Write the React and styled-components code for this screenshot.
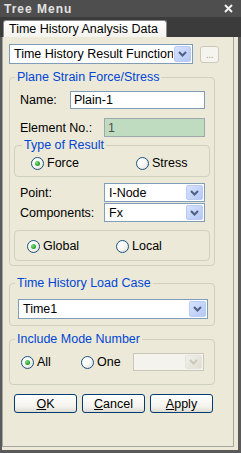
import React from 'react';
import styled, { createGlobalStyle } from 'styled-components';

const GlobalStyle = createGlobalStyle`
  html, body {
    margin: 0;
    padding: 0;
  }
  body {
    font-family: "Liberation Sans", Arial, sans-serif;
    font-size: 12.5px;
    background: #ece9d8;
    color: #000;
  }
`;

const Window = styled.div`
  width: 241px;
  height: 453px;
  display: flex;
  flex-direction: column;
  background: #4b4b4b;
  overflow: hidden;
`;

const TitleBar = styled.div`
  height: 17px;
  display: flex;
  align-items: center;
  justify-content: space-between;
  padding: 0 8px 0 4px;
  background: #4e4e4e;
  color: #e2e2e2;
  font-weight: bold;
  font-size: 12px;
  letter-spacing: 1px;
`;

const TabStrip = styled.div`
  height: 20px;
  box-sizing: border-box;
  display: flex;
  align-items: flex-end;
  padding-left: 3px;
  background: #3b3b3b;
`;

const Tab = styled.div`
  width: 164px;
  height: 17px;
  box-sizing: border-box;
  padding-left: 5px;
  line-height: 16px;
  white-space: nowrap;
  overflow: hidden;
  background: linear-gradient(#ffffff, #f4f3ee);
  border: 1px solid #8a8a8a;
  border-bottom: none;
  border-radius: 3px 3px 0 0;
`;

const Body = styled.div`
  flex: 1;
  display: flex;
  background: #ece9d8;
  border-left: 2px solid #5a5a5a;
  border-right: 3px solid #5a5a5a;
  border-bottom: 3px solid #5a5a5a;
  padding: 0 4px 3px 0;
`;

const Page = styled.div`
  flex: 1;
  display: flex;
  flex-direction: column;
  align-items: flex-start;
  border: 1px solid #a6a6a0;
  border-top: none;
  padding: 7px 0 0 6px;
`;

const TopRow = styled.div`
  display: flex;
  align-items: flex-start;
  gap: 7px;
`;

const ComboBox = styled.div`
  width: ${p => p.$width}px;
  height: ${p => p.$height || 20}px;
  box-sizing: border-box;
  display: flex;
  align-items: stretch;
  border: 1px solid ${p => (p.$disabled ? '#c9c7ba' : '#7f9db9')};
  background: ${p => (p.$disabled ? '#f4f3ee' : '#fff')};
`;

const ComboText = styled.span`
  flex: 1;
  min-width: 0;
  overflow: hidden;
  white-space: nowrap;
  padding-left: 4px;
  display: flex;
  align-items: center;
`;

const ArrowButton = styled.span`
  width: 17px;
  flex: none;
  margin: 1px;
  box-sizing: border-box;
  display: flex;
  align-items: center;
  justify-content: center;
  border-radius: 2px;
  border: 1px solid ${p => (p.$disabled ? '#e6e4da' : '#b9cbf5')};
  background: ${p =>
    p.$disabled
      ? 'linear-gradient(135deg, #f2f1ea, #dedcd2)'
      : 'linear-gradient(135deg, #d7e2fc, #b4c8f6)'};
`;

const DotsButton = styled.div`
  width: 19px;
  height: 17px;
  margin-top: 2px;
  box-sizing: border-box;
  border: 1px solid #cbc8bb;
  border-radius: 3px;
  background: #f5f4ee;
  color: #aca899;
  font-size: 11px;
  line-height: 14px;
  text-align: center;
  letter-spacing: -0.5px;
`;

const Group = styled.div`
  display: flex;
  flex-direction: column;
  align-items: flex-start;
  margin-top: ${p => p.$mt || 0}px;
  margin-left: ${p => p.$ml || 0}px;
`;

const Caption = styled.div`
  position: relative;
  z-index: 1;
  margin: 0 0 -7px ${p => p.$ml || 6}px;
  padding: 0 2px;
  line-height: 14px;
  color: #0046d5;
  background: #ece9d8;
`;

const Box = styled.div`
  width: ${p => p.$width || 206}px;
  box-sizing: border-box;
  display: flex;
  flex-direction: column;
  align-items: flex-start;
  border: 1px solid #d0d0bf;
  border-radius: 4px;
  padding: ${p => p.$pad};
  margin-top: ${p => p.$mt || 0}px;
  margin-left: ${p => p.$ml || 0}px;
`;

const FieldRow = styled.div`
  display: flex;
  align-items: center;
  margin-top: ${p => p.$mt || 0}px;
`;

const Label = styled.span`
  width: ${p => p.$width}px;
  white-space: nowrap;
`;

const TextField = styled.div`
  width: ${p => p.$width}px;
  height: ${p => p.$height || 18}px;
  box-sizing: border-box;
  padding-left: 3px;
  display: flex;
  align-items: center;
  border: 1px solid ${p => (p.$readOnly ? '#9fa8ae' : '#7f9db9')};
  background: ${p => (p.$readOnly ? '#c0dcc0' : '#fff')};
  color: ${p => (p.$readOnly ? '#505050' : '#000')};
`;

const RadioRow = styled.div`
  display: flex;
  align-items: center;
  height: ${p => p.$height || 14}px;
`;

const Option = styled.label`
  width: ${p => p.$width}px;
  display: flex;
  align-items: center;
  gap: 3px;
  white-space: nowrap;
`;

const RadioDot = styled.span`
  width: 13px;
  height: 13px;
  flex: none;
  box-sizing: border-box;
  border-radius: 50%;
  border: 1px solid #1c5180;
  background: radial-gradient(circle at 30% 30%, #ffffff 30%, #dcdbd3 100%);
  display: flex;
  align-items: center;
  justify-content: center;

  &::after {
    content: '';
    width: 5px;
    height: 5px;
    border-radius: 50%;
    background: ${p =>
      p.$checked ? 'radial-gradient(circle at 35% 35%, #7fe07f, #1f9e1f 70%)' : 'transparent'};
  }
`;

const ButtonRow = styled.div`
  display: flex;
  gap: 5px;
  margin: 9px 0 0 5px;
`;

const Button = styled.div`
  width: 63px;
  height: 19px;
  box-sizing: border-box;
  display: flex;
  align-items: center;
  justify-content: center;
  border: 1px solid #003c74;
  border-radius: 3px;
  background: linear-gradient(#ffffff, #f3f2ec 70%, #dedbd0);

  u {
    text-decoration: underline;
  }
`;

const Chevron = ({ color }) => (
  <svg width="9" height="6" viewBox="0 0 9 6">
    <polyline points="1,1 4.5,4.5 8,1" fill="none" stroke={color} strokeWidth="2" />
  </svg>
);

const CloseIcon = () => (
  <svg width="9" height="9" viewBox="0 0 9 9">
    <path d="M1 1 L8 8 M8 1 L1 8" stroke="#f2f2f2" strokeWidth="2" />
  </svg>
);

const Combo = ({ width, height, value, disabled }) => (
  <ComboBox $width={width} $height={height} $disabled={disabled}>
    <ComboText>{value}</ComboText>
    <ArrowButton $disabled={disabled}>
      <Chevron color={disabled ? '#c9c7ba' : '#4d6185'} />
    </ArrowButton>
  </ComboBox>
);

const Radio = ({ width, checked, children }) => (
  <Option $width={width}>
    <RadioDot $checked={checked} />
    {children}
  </Option>
);

export default function App() {
  return (
    <Window>
      <GlobalStyle />
      <TitleBar>
        <span>Tree Menu</span>
        <CloseIcon />
      </TitleBar>
      <TabStrip>
        <Tab>Time History Analysis Data</Tab>
      </TabStrip>
      <Body>
        <Page>
          <TopRow>
            <Combo width={184} value="Time History Result Function" />
            <DotsButton>...</DotsButton>
          </TopRow>

          <Group $mt={6}>
            <Caption>Plane Strain Force/Stress</Caption>
            <Box $pad="13px 8px 4px 10px">
              <FieldRow>
                <Label $width={50}>Name:</Label>
                <TextField $width={135}>Plain-1</TextField>
              </FieldRow>
              <FieldRow $mt={9}>
                <Label $width={84}>Element No.:</Label>
                <TextField $width={101} $height={19} $readOnly>1</TextField>
              </FieldRow>

              <Group $mt={1} $ml={-6}>
                <Caption $ml={8}>Type of Result</Caption>
                <Box $width={196} $pad="10px 0 6px 16px">
                  <RadioRow>
                    <Radio width={105} checked>Force</Radio>
                    <Radio width={70}>Stress</Radio>
                  </RadioRow>
                </Box>
              </Group>

              <FieldRow $mt={6}>
                <Label $width={84}>Point:</Label>
                <Combo width={101} height={19} value="I-Node" />
              </FieldRow>
              <FieldRow $mt={1}>
                <Label $width={84}>Components:</Label>
                <Combo width={101} height={19} value="Fx" />
              </FieldRow>

              <Box $width={196} $mt={8} $ml={-6} $pad="8px 0 7px 12px">
                <RadioRow>
                  <Radio width={89} checked>Global</Radio>
                  <Radio width={70}>Local</Radio>
                </RadioRow>
              </Box>
            </Box>
          </Group>

          <Group $mt={10}>
            <Caption>Time History Load Case</Caption>
            <Box $pad="15px 0 6px 8px">
              <Combo width={190} value="Time1" />
            </Box>
          </Group>

          <Group $mt={6}>
            <Caption>Include Mode Number</Caption>
            <Box $pad="13px 0 13px 11px">
              <RadioRow $height={18}>
                <Radio width={60} checked>All</Radio>
                <Radio width={52}>One</Radio>
                <Combo width={71} height={18} disabled />
              </RadioRow>
            </Box>
          </Group>

          <ButtonRow>
            <Button><span><u>O</u>K</span></Button>
            <Button><span><u>C</u>ancel</span></Button>
            <Button><span><u>A</u>pply</span></Button>
          </ButtonRow>
        </Page>
      </Body>
    </Window>
  );
}
